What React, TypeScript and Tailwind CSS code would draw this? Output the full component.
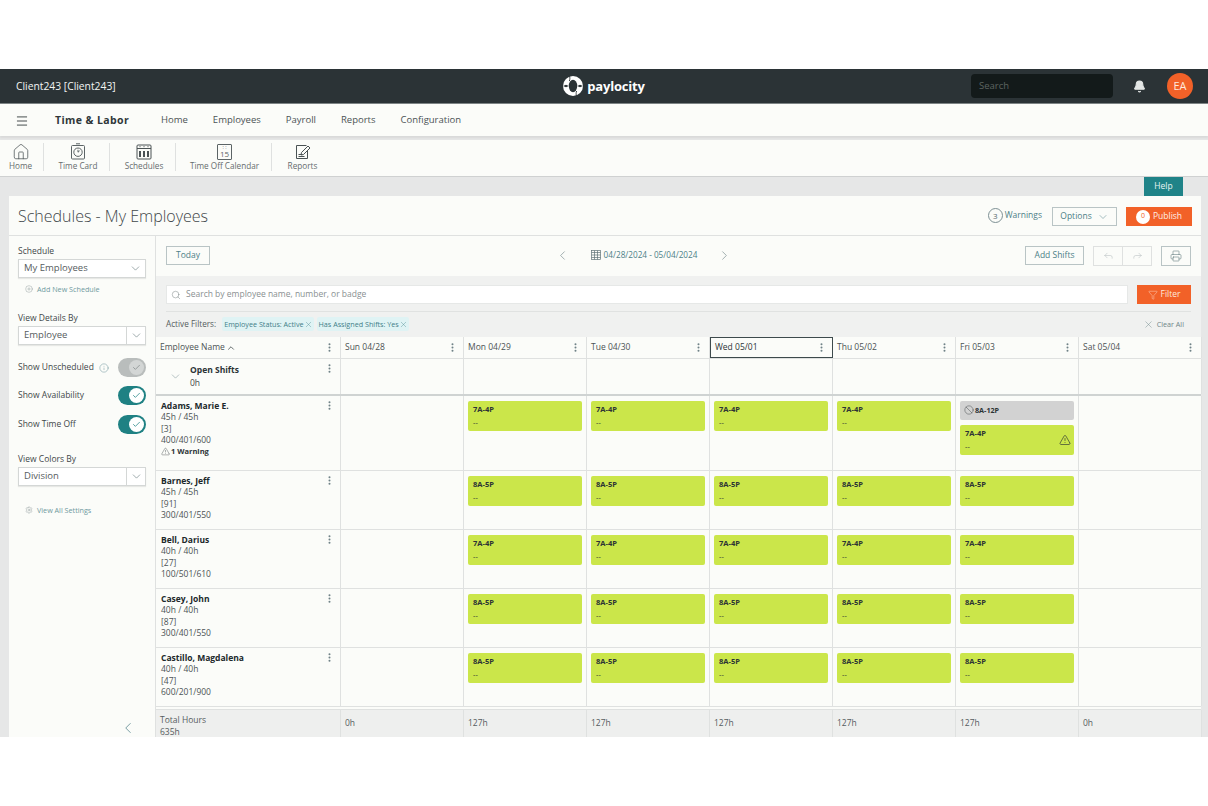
import { AlertTriangle, Ban, Bell, Check, ChevronDown, ChevronLeft, ChevronRight, ChevronUp, CirclePlus, Filter, Forward, Home, Info, Menu, Printer, Reply, Search, Settings, X, EllipsisVertical } from 'lucide-react';

const navLinks = ['Home', 'Employees', 'Payroll', 'Reports', 'Configuration'];
const days = ['Sun 04/28', 'Mon 04/29', 'Tue 04/30', 'Wed 05/01', 'Thu 05/02', 'Fri 05/03', 'Sat 05/04'];
const totals = ['0h', '127h', '127h', '127h', '127h', '127h', '0h'];

const employees = [
  { name: 'Adams, Marie E.', hours: '45h / 45h', id: '[3]', org: '400/401/600', shift: '7A-4P', warning: true, h: 'h-[75px]' },
  { name: 'Barnes, Jeff', hours: '45h / 45h', id: '[91]', org: '300/401/550', shift: '8A-5P', warning: false, h: 'h-[59px]' },
  { name: 'Bell, Darius', hours: '40h / 40h', id: '[27]', org: '100/501/610', shift: '7A-4P', warning: false, h: 'h-[59px]' },
  { name: 'Casey, John', hours: '40h / 40h', id: '[87]', org: '300/401/550', shift: '8A-5P', warning: false, h: 'h-[59px]' },
  { name: 'Castillo, Magdalena', hours: '40h / 40h', id: '[47]', org: '600/201/900', shift: '8A-5P', warning: false, h: 'h-[59px]' },
];

function Logo() {
  return (
    <svg width="20" height="20" viewBox="0 0 20 20">
      <circle cx="10" cy="10" r="10" fill="#fff" />
      <ellipse cx="10" cy="10" rx="4.2" ry="6.2" fill="#2b3336" />
      <path d="M0 10 L3 8.8 L5.8 10 L3 11.2Z M20 10 L17 8.8 L14.2 10 L17 11.2Z" fill="#2b3336" />
      <path d="M6.5 0 C7 1.5 7 3 6.4 5 M13.5 20 C13 18.5 13 17 13.6 15" stroke="#2b3336" strokeWidth="0.9" fill="none" />
    </svg>
  );
}

function TimeCardIcon() {
  return (
    <svg width="16" height="17" viewBox="0 0 16 17" fill="none" stroke="#5c6466" strokeWidth="1">
      <rect x="1.5" y="2.5" width="13" height="13.5" rx="1" />
      <circle cx="8" cy="9.2" r="4.2" />
      <path d="M8 6.8v2.4l1.6-1.4M6 .8h4" />
    </svg>
  );
}

function SchedulesIcon() {
  return (
    <svg width="16" height="16" viewBox="0 0 16 16" fill="none" stroke="#4a5254" strokeWidth="1">
      <rect x="1" y="1" width="14" height="14" rx="1" />
      <path d="M1 4.5h14" />
      <path d="M4 2.2v1M8 2.2v1M12 2.2v1" />
      <path d="M4 7v6M8 7v6M12 7v6" strokeWidth="2" />
    </svg>
  );
}

function CalendarDayIcon() {
  return (
    <span className="flex h-[16px] w-[15px] flex-col items-center rounded-[1px] border border-[#5c6466] text-[8px] leading-[8px] text-[#5c6466]">
      <span className="h-[5px] text-[5px] leading-[5px]">: :</span>
      <span>15</span>
    </span>
  );
}

function ReportsIcon() {
  return (
    <svg width="16" height="16" viewBox="0 0 16 16" fill="none" stroke="#4a5254" strokeWidth="1">
      <path d="M12.5 7v7.5h-11v-13h10" />
      <path d="M3.5 10.5h4M3.5 12.5h6" />
      <path d="M6.5 8.5 13 2l2 2-6.5 6.5-2.5.5Z" />
    </svg>
  );
}

function GridCalendarIcon() {
  return (
    <svg width="10" height="10" viewBox="0 0 10 10" fill="none" stroke="#5f7377" strokeWidth="0.7">
      <rect x="0.5" y="0.5" width="9" height="9" />
      <path d="M.5 2.5h9M.5 5h9M.5 7.5h9M3.5 .5v9M6.5 .5v9" />
    </svg>
  );
}

function ToolbarItem({ label, icon, w }: { label: string; icon: React.ReactNode; w: string }) {
  return (
    <div className={`flex h-[28px] flex-col items-center justify-between border-r border-[#dfe1e0] ${w}`}>
      <div className="flex h-[17px] items-center">{icon}</div>
      <span className="text-[8.2px] leading-[11px] text-[#666c6e]">{label}</span>
    </div>
  );
}

function Toggle({ on }: { on: boolean }) {
  return (
    <div className={`flex h-[19px] w-[28px] items-center justify-end rounded-full pr-[2px] ${on ? 'bg-[#1f8183]' : 'bg-[#b9bdbc]'}`}>
      <div className={`flex h-[15px] w-[15px] items-center justify-center rounded-full ${on ? 'bg-white' : 'bg-[#d3d6d5]'}`}>
        <Check size={9} className={on ? 'text-[#1f8183]' : 'text-[#83898a]'} />
      </div>
    </div>
  );
}

function Kebab() {
  return <EllipsisVertical size={11} strokeWidth={2.4} className="text-[#6e8186]" />;
}

function SideSelect({ value, split }: { value: string; split?: boolean }) {
  return (
    <div className="mt-[2px] flex h-[19px] items-center border border-[#d4d7d6] bg-white pl-[5px] text-[9.5px] text-[#565c5e] shadow-[0_1px_1px_rgba(0,0,0,0.08)]">
      <span className="flex-1">{value}</span>
      <span className={`flex h-full w-[19px] items-center justify-center ${split ? 'border-l border-[#d4d7d6]' : ''}`}>
        <ChevronDown size={13} strokeWidth={1} className="text-[#4f6468]" />
      </span>
    </div>
  );
}

function Shift({ time, warn }: { time: string; warn?: boolean }) {
  return (
    <div className="relative h-[30px] w-[114px] rounded-[2px] bg-[#cbe64a] px-[5px] pt-[3px] text-[#2c3335]">
      <div className="text-[7.5px] font-bold leading-[10px]">{time}</div>
      <div className="mt-[3px] text-[7.5px] leading-[10px]">--</div>
      {warn && <AlertTriangle size={12} strokeWidth={1.3} className="absolute right-[3px] top-[9px] text-[#2c3335]" />}
    </div>
  );
}

export default function App() {
  return (
    <div className="flex h-[806px] w-[1208px] flex-col overflow-hidden bg-white pt-[69px] font-['Open_Sans',sans-serif]">
      <div className="flex h-[668px] flex-col overflow-hidden bg-[#e6e7e7]">
        <header className="flex h-[35px] shrink-0 items-center border-b border-[#7d8485] bg-[#2b3336] pl-[16px] pr-[15px]">
          <span className="w-[260px] pt-[1px] text-[10.3px] text-[#f2f4f3]">Client243 [Client243]</span>
          <div className="flex flex-1 items-center justify-center gap-[4px] pr-[39px]">
            <Logo />
            <span className="text-[13px] font-bold leading-none tracking-[-0.2px] text-white">paylocity</span>
          </div>
          <div className="flex h-[24px] w-[142px] items-center rounded-[4px] bg-[#131a1a] px-[8px] text-[9.5px] text-[#5d6561]">Search</div>
          <Bell size={13} fill="#e3e6e5" className="ml-[20px] text-[#e3e6e5]" />
          <div className="ml-[21px] flex h-[26px] w-[26px] items-center justify-center rounded-full bg-[#f26128] text-[11px] text-[#ffe9dd]">EA</div>
        </header>

        <nav className="flex h-[32px] shrink-0 items-center bg-[#fbfcf9] pl-[15px] pt-[1px] shadow-[0_2px_2px_rgba(0,0,0,0.06)]">
          <Menu size={14} strokeWidth={1.6} className="text-[#3a4244]" />
          <span className="ml-[26px] w-[106px] text-[10.5px] font-bold tracking-[0.4px] text-[#2f3739]">Time &amp; Labor</span>
          <div className="flex gap-[25px]">
            {navLinks.map(link => (
              <span key={link} className="text-[9.5px] text-[#4b5355]">{link}</span>
            ))}
          </div>
        </nav>

        <div className="mt-[4px] flex h-[37px] shrink-0 items-start border-b border-[#cfd1d1] bg-[#fbfcf9] pt-[3px]">
          <ToolbarItem w="w-[44px] pr-[2px]" label="Home" icon={<Home size={18} strokeWidth={1} className="text-[#4a5254]" />} />
          <ToolbarItem w="w-[66px] pl-[3px]" label="Time Card" icon={<TimeCardIcon />} />
          <ToolbarItem w="w-[66px] pl-[3px]" label="Schedules" icon={<SchedulesIcon />} />
          <ToolbarItem w="w-[96px] pl-[2px]" label="Time Off Calendar" icon={<CalendarDayIcon />} />
          <div className="flex h-[28px] w-[59px] flex-col items-center justify-between pl-[2px]">
            <div className="flex h-[17px] items-center"><ReportsIcon /></div>
            <span className="text-[8.2px] leading-[11px] text-[#666c6e]">Reports</span>
          </div>
        </div>

        <div className="flex h-[19px] shrink-0 justify-end pr-[25px]">
          <div className="flex h-[19px] w-[39px] items-center justify-center bg-[#1f8388] text-[8.5px] text-[#e9f4f4]">Help</div>
        </div>

        <main className="ml-[9px] mr-[7px] flex min-h-0 flex-1 flex-col bg-[#fbfcf9]">
          <div className="flex h-[40px] shrink-0 items-center border-b border-[#dfe1e0] pl-[9px] pr-[9px]">
            <h1 className="flex-1 text-[16px] font-light text-[#3f4749]">Schedules - My Employees</h1>
            <span className="flex h-[15px] w-[15px] items-center justify-center rounded-full border border-[#7d9094] text-[8px] text-[#56696d]">3</span>
            <span className="ml-[2px] text-[8.5px] text-[#4d7f87]">Warnings</span>
            <div className="ml-[10px] mt-[2px] flex h-[19px] w-[65px] items-center justify-center gap-[5px] border border-[#b9c4c5] text-[8.5px] text-[#4d7f87]">
              Options <ChevronDown size={12} strokeWidth={1} />
            </div>
            <div className="ml-[9px] mt-[2px] flex h-[19px] w-[66px] items-center justify-center gap-[3px] bg-[#f26128] text-[8.5px] text-[#fff0e8]">
              <span className="flex h-[14px] w-[14px] items-center justify-center rounded-full bg-white text-[7px] text-[#f26128]">0</span>
              Publish
            </div>
          </div>

          <div className="flex min-h-0 flex-1">
            <aside className="relative w-[147px] shrink-0 border-r border-[#dfe1e0] px-[9px] pt-[9px] text-[#3f4749]">
              <div className="text-[8.5px] leading-[12px]">Schedule</div>
              <SideSelect value="My Employees" />
              <div className="mt-[5px] flex items-center gap-[4px] pl-[7px] text-[7.2px] leading-[12px] text-[#6f9aa0]">
                <CirclePlus size={8} strokeWidth={1} className="text-[#6b7a7c]" /> Add New Schedule
              </div>
              <div className="mt-[17px] text-[8.5px] leading-[12px]">View Details By</div>
              <SideSelect value="Employee" split />
              <div className="mt-[13px] flex h-[19px] items-center text-[8.5px]">
                <span>Show Unscheduled</span>
                <Info size={10} strokeWidth={1} className="ml-[5px] text-[#4d7f87]" />
                <span className="flex-1" />
                <Toggle on={false} />
              </div>
              <div className="mt-[9px] flex h-[19px] items-center justify-between text-[8.5px]">
                <span>Show Availability</span>
                <Toggle on />
              </div>
              <div className="mt-[10px] flex h-[19px] items-center justify-between text-[8.5px]">
                <span>Show Time Off</span>
                <Toggle on />
              </div>
              <div className="mt-[19px] text-[8.5px] leading-[12px]">View Colors By</div>
              <SideSelect value="Division" split />
              <div className="mt-[18px] flex items-center gap-[4px] pl-[7px] text-[7.2px] leading-[12px] text-[#6f9aa0]">
                <Settings size={8} strokeWidth={1} className="text-[#6b7a7c]" /> View All Settings
              </div>
              <ChevronLeft size={18} strokeWidth={1} className="absolute bottom-[0px] right-[18px] text-[#4d7f87]" />
            </aside>

            <section className="flex min-w-0 flex-1 flex-col">
              <div className="flex h-[40px] shrink-0 items-center pl-[10px] pr-[10px]">
                <div className="-mt-[2px] flex h-[19px] w-[44px] items-center justify-center border border-[#b9c4c5] text-[8.5px] text-[#4d7f87]">Today</div>
                <div className="-mt-[1px] flex flex-1 items-center justify-center gap-[10px] pl-[52px] text-[8.2px] text-[#4d7f87]">
                  <ChevronLeft size={15} strokeWidth={1} className="mr-[11px] text-[#6f8286]" />
                  <span className="flex items-center gap-[3px]"><GridCalendarIcon />04/28/2024 - 05/04/2024</span>
                  <ChevronRight size={15} strokeWidth={1} className="ml-[10px] text-[#6f8286]" />
                </div>
                <div className="-mt-[2px] flex h-[19px] w-[59px] items-center justify-center border border-[#b9c4c5] text-[8.5px] text-[#4d7f87]">Add Shifts</div>
                <div className="-mt-[1px] ml-[9px] flex h-[20px] w-[59px] border border-[#dfe1e0]">
                  <span className="flex flex-1 items-center justify-center border-r border-[#dfe1e0]"><Reply size={11} strokeWidth={1} className="text-[#aab3b4]" /></span>
                  <span className="flex flex-1 items-center justify-center"><Forward size={11} strokeWidth={1} className="text-[#aab3b4]" /></span>
                </div>
                <div className="-mt-[1px] ml-[9px] flex h-[20px] w-[30px] items-center justify-center border border-[#b9c4c5]"><Printer size={12} strokeWidth={1} className="text-[#4d6a6f]" /></div>
              </div>

              <div className="h-[61px] shrink-0 bg-[#f0f1f0] pl-[10px] pr-[10px] pt-[9px]">
                <div className="flex gap-[9px]">
                  <div className="flex h-[19px] flex-1 items-center gap-[5px] border border-[#e6e8e7] bg-white pl-[4px] text-[8.5px] text-[#8a9091]">
                    <Search size={10} strokeWidth={1} className="text-[#5f6a6c]" />
                    Search by employee name, number, or badge
                  </div>
                  <div className="flex h-[19px] w-[54px] items-center justify-center gap-[3px] bg-[#f26128] text-[8.5px] text-[#ffe9dd]">
                    <Filter size={10} strokeWidth={1} /> Filter
                  </div>
                </div>
                <div className="mt-[7px] flex h-[20px] items-center border-t border-[#e0e2e1] pr-[7px] pt-[5px] text-[8.2px] text-[#565c5e]">
                  <span className="mr-[6px]">Active Filters:</span>
                  <span className="flex h-[14px] items-center rounded-[2px] bg-[#dff3f4] pl-[2px] pr-[1px] text-[7.2px] text-[#3f8089]">Employee Status: Active <X size={9} strokeWidth={1} /></span>
                  <span className="ml-[3px] flex h-[14px] items-center rounded-[2px] bg-[#dff3f4] pl-[2px] pr-[1px] text-[7.2px] text-[#3f8089]">Has Assigned Shifts: Yes <X size={9} strokeWidth={1} /></span>
                  <span className="flex-1" />
                  <span className="flex items-center gap-[3px] text-[7.2px] text-[#6f8689]"><X size={11} strokeWidth={1} /> Clear All</span>
                </div>
              </div>

              <div className="grid h-[22px] shrink-0 grid-cols-[185px_repeat(7,123px)] border-b border-[#dfe1e0] text-[8.5px] text-[#4b5355]">
                <div className="flex items-center border-r border-[#dfe1e0] pl-[4px] pr-[5px]">
                  <span>Employee Name</span>
                  <ChevronUp size={10} className="ml-[1px]" />
                  <span className="flex-1" />
                  <Kebab />
                </div>
                {days.map(d => (
                  <div key={d} className={`flex items-center pl-[4px] pr-[5px] ${d === 'Wed 05/01' ? 'border border-[#3d4a4c] text-[#2b3336]' : 'border-r border-[#dfe1e0]'}`}>
                    <span className="flex-1">{d}</span>
                    <Kebab />
                  </div>
                ))}
              </div>

              <div className="grid h-[37px] shrink-0 grid-cols-[185px_repeat(7,123px)] border-b-2 border-[#cfd3d2]">
                <div className="flex border-r border-[#dfe1e0] pl-[13px] pr-[5px] pt-[4px]">
                  <ChevronDown size={13} strokeWidth={1} className="mt-[7px] text-[#7b9195]" />
                  <div className="ml-[8px] flex-1 text-[8.5px] leading-[13px] text-[#3f4749]">
                    <div className="font-bold text-[#2b3336]">Open Shifts</div>
                    <div>0h</div>
                  </div>
                  <Kebab />
                </div>
                {days.map(d => <div key={d} className="border-r border-[#dfe1e0]" />)}
              </div>

              {employees.map(emp => (
                <div key={emp.name} className={`grid shrink-0 grid-cols-[185px_repeat(7,123px)] border-b border-[#dfe1e0] ${emp.h}`}>
                  <div className="flex border-r border-[#dfe1e0] pl-[5px] pr-[5px] pt-[4px]">
                    <div className="flex-1 text-[8.5px] leading-[11.4px] text-[#4b5355]">
                      <div className="font-bold text-[#20282a]">{emp.name}</div>
                      <div>{emp.hours}</div>
                      <div>{emp.id}</div>
                      <div>{emp.org}</div>
                      {emp.warning && (
                        <div className="flex items-center gap-[1px] text-[7.5px] font-bold text-[#2b3336]"><AlertTriangle size={9} strokeWidth={1} />1 Warning</div>
                      )}
                    </div>
                    <Kebab />
                  </div>
                  {days.map((d, i) => (
                    <div key={d} className="flex flex-col gap-[5px] border-r border-[#dfe1e0] pl-[4px] pt-[5px]">
                      {emp.warning && i === 5 && (
                        <div className="flex h-[19px] w-[114px] items-center gap-[1.5px] rounded-[2px] bg-[#d2d2d2] pl-[3.5px] text-[7.2px] font-bold text-[#2c3335]">
                          <Ban size={10} strokeWidth={1} className="-mt-[2px]" /> 8A-12P
                        </div>
                      )}
                      {i > 0 && i < 6 && <Shift time={emp.shift} warn={emp.warning && i === 5} />}
                    </div>
                  ))}
                </div>
              ))}

              <div className="mt-[2px] grid min-h-0 flex-1 grid-cols-[185px_repeat(7,123px)] border-t border-[#dfe1e0] bg-[#eeefee] text-[8.5px] text-[#565c5e]">
                <div className="border-r border-[#dfe1e0] pl-[4px] pt-[4px] leading-[11.5px]">
                  <div>Total Hours</div>
                  <div>635h</div>
                </div>
                {totals.map((t, i) => (
                  <div key={i} className="flex items-center border-r border-[#dfe1e0] pl-[4px]">{t}</div>
                ))}
              </div>
            </section>
          </div>
        </main>
      </div>
    </div>
  );
}
